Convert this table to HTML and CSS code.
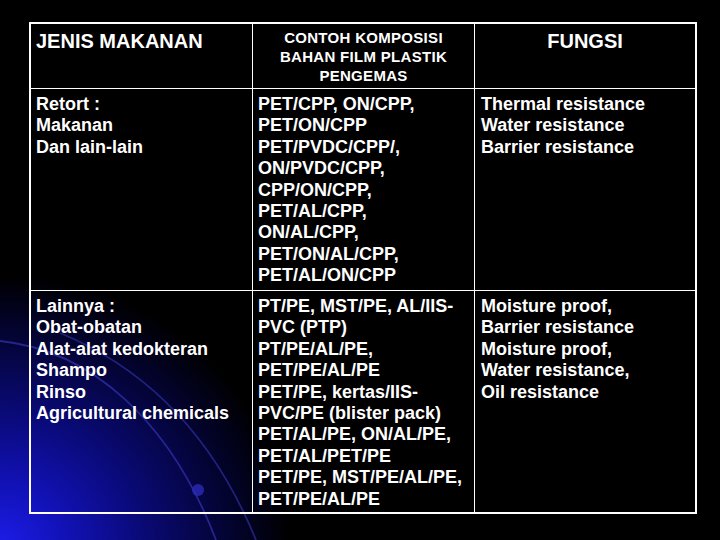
FILE: index.html
```html
<!DOCTYPE html>
<html lang="id">
<head>
<meta charset="utf-8">
<title>Kemasan Film Plastik</title>
<link rel="stylesheet" href="styles.css">
</head>
<body>
<div class="slide">
  <svg class="deco" width="720" height="540" viewBox="0 0 720 540" aria-hidden="true">
    <path d="M0 341 C 90 350, 170 420, 216 540" fill="none" stroke="#3a3ac0" stroke-width="1.8" stroke-opacity="0.6"/>
    <path d="M60 333 C 150 370, 215 440, 256 540" fill="none" stroke="#3a3ac0" stroke-width="1.8" stroke-opacity="0.55"/>
    <circle cx="198" cy="490" r="6" fill="#2a2ab8" fill-opacity="0.8"/>
  </svg>
  <div class="grid">
    <div class="cell head">JENIS MAKANAN</div>
    <div class="cell head sub">CONTOH KOMPOSISI<br>BAHAN FILM PLASTIK<br>PENGEMAS</div>
    <div class="cell head center c3">FUNGSI</div>

    <div class="cell">Retort :<br>Makanan<br>Dan lain-lain</div>
    <div class="cell">PET/CPP, ON/CPP,<br>PET/ON/CPP<br>PET/PVDC/CPP/,<br>ON/PVDC/CPP,<br>CPP/ON/CPP,<br>PET/AL/CPP,<br>ON/AL/CPP,<br>PET/ON/AL/CPP,<br>PET/AL/ON/CPP</div>
    <div class="cell c3">Thermal resistance<br>Water resistance<br>Barrier resistance</div>

    <div class="cell last">Lainnya :<br>Obat-obatan<br>Alat-alat kedokteran<br>Shampo<br>Rinso<br>Agricultural chemicals</div>
    <div class="cell last">PT/PE, MST/PE, AL/IIS-<br>PVC (PTP)<br>PT/PE/AL/PE,<br>PET/PE/AL/PE<br>PET/PE, kertas/IIS-<br>PVC/PE (blister pack)<br>PET/AL/PE, ON/AL/PE,<br>PET/AL/PET/PE<br>PET/PE, MST/PE/AL/PE,<br>PET/PE/AL/PE</div>
    <div class="cell last c3">Moisture proof,<br>Barrier resistance<br>Moisture proof,<br>Water resistance,<br>Oil resistance</div>
  </div>
</div>
</body>
</html>
```

FILE: styles.css
```css
html, body {
  margin: 0;
  padding: 0;
  background: #000;
}

.slide {
  position: relative;
  width: 720px;
  height: 540px;
  overflow: hidden;
  box-sizing: border-box;
  padding: 22px 0 0 29px;
  background:
    radial-gradient(ellipse 290px 270px at 0 545px,
      #1c1ce8 0%, #1212b8 22%, #0a0a7a 48%, #04043a 75%, #000 100%),
    #000;
  font-family: "Liberation Sans", Arial, sans-serif;
  color: #fff;
}

.deco {
  position: absolute;
  left: 0;
  top: 0;
}

.grid {
  position: relative;
  display: grid;
  grid-template-columns: 222px 222px 1fr;
  grid-template-rows: 65px 202px 1fr;
  width: 668px;
  height: 492px;
  box-sizing: border-box;
  border: 2px solid #fff;
}

.cell {
  box-sizing: border-box;
  border-right: 1px solid #fff;
  border-bottom: 1px solid #fff;
  padding: 5px 4px 0 5px;
  font-weight: bold;
  font-size: 18px;
  line-height: 21.4px;
  white-space: nowrap;
}

.cell.c3 {
  border-right: none;
  padding-left: 6px;
}

.cell.last {
  border-bottom: none;
}

.cell.head {
  font-size: 20px;
  line-height: 24px;
  padding-top: 5px;
}

.cell.center {
  text-align: center;
  padding-left: 0;
  padding-right: 0;
}

.cell.sub {
  font-size: 15px;
  line-height: 19.2px;
  letter-spacing: 0.3px;
  text-align: center;
  padding: 4px 0 0;
}
```
